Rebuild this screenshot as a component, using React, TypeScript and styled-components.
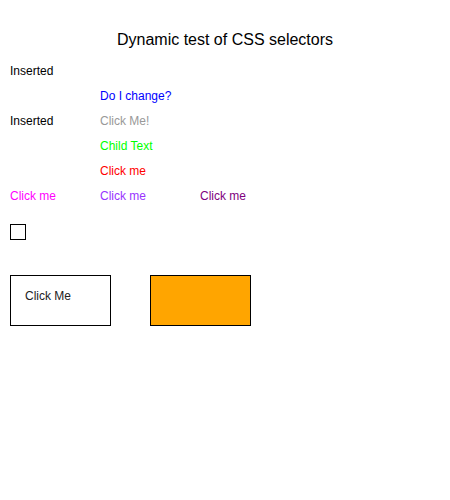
import React from "react";
import styled, { createGlobalStyle } from "styled-components";

const Global = createGlobalStyle`
  html, body { margin: 0; padding: 0; background: #fff; }
  body { font-family: "Liberation Sans", Arial, sans-serif; font-size: 12px; color: #000; }
`;

const Page = styled.div`
  width: 450px;
  padding: 0 10px;
  box-sizing: border-box;
`;

const Title = styled.div`
  margin-top: 30px;
  height: 20px;
  line-height: 20px;
  font-size: 16px;
  text-align: center;
  color: #000;
`;

const Grid = styled.div`
  margin-top: 9px;
  display: grid;
  grid-template-columns: 90px 100px 100px;
  grid-auto-rows: 25px;
`;

const Cell = styled.div<{ $color?: string; $col: number; $row: number }>`
  grid-column: ${(p) => p.$col};
  grid-row: ${(p) => p.$row};
  line-height: 25px;
  font-size: 12px;
  color: ${(p) => p.$color ?? "#000"};
  white-space: nowrap;
  cursor: default;
`;

const Check = styled.div`
  margin-top: 15px;
  width: 16px;
  height: 16px;
  box-sizing: border-box;
  border: 1px solid #000;
  background: #fff;
`;

const BoxRow = styled.div`
  margin-top: 35px;
  display: flex;
  gap: 39px;
`;

const Box = styled.div<{ $fill?: string }>`
  width: 101px;
  height: 51px;
  box-sizing: border-box;
  border: 1px solid #000;
  background: ${(p) => p.$fill ?? "#fff"};
  padding: 13px 14px;
  font-size: 12px;
  color: #222;
`;

export default function App() {
  return (
    <>
      <Global />
      <Page>
        <Title>Dynamic test of CSS selectors</Title>
        <Grid>
          <Cell $col={1} $row={1}>Inserted</Cell>
          <Cell $col={2} $row={2} $color="#0000ff">Do I change?</Cell>
          <Cell $col={1} $row={3}>Inserted</Cell>
          <Cell $col={2} $row={3} $color="#999999">Click Me!</Cell>
          <Cell $col={2} $row={4} $color="#00ff00">Child Text</Cell>
          <Cell $col={2} $row={5} $color="#ff0000">Click me</Cell>
          <Cell $col={1} $row={6} $color="#ff00ff">Click me</Cell>
          <Cell $col={2} $row={6} $color="#9933ff">Click me</Cell>
          <Cell $col={3} $row={6} $color="#800080">Click me</Cell>
        </Grid>
        <Check />
        <BoxRow>
          <Box>Click Me</Box>
          <Box $fill="#ffa500" />
        </BoxRow>
      </Page>
    </>
  );
}
